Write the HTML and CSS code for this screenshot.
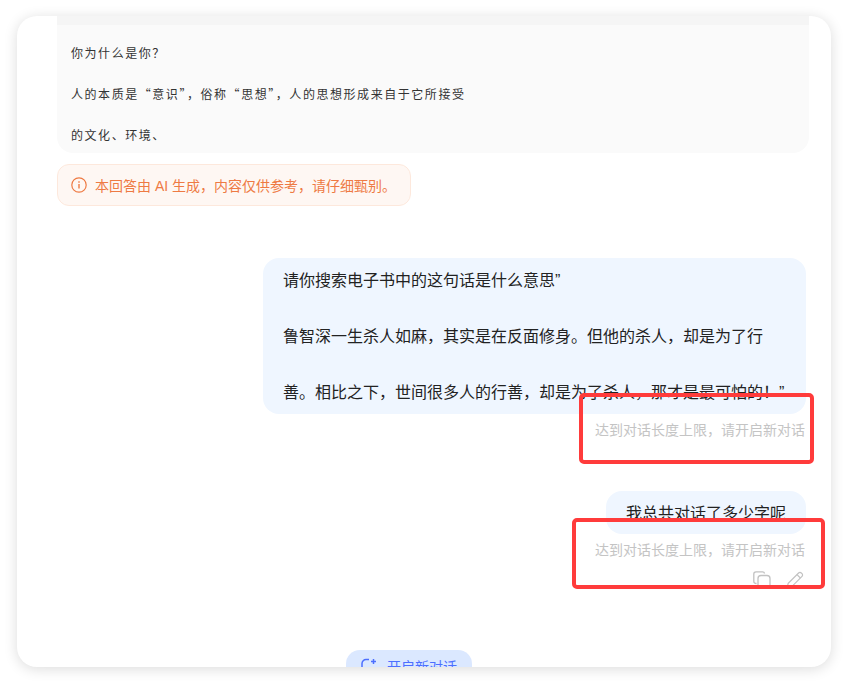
FILE: index.html
```html
<!DOCTYPE html>
<html lang="zh-CN">
<head>
    <meta charset="UTF-8">
    <meta name="viewport" content="width=device-width, initial-scale=1.0">
    <title>对话</title>
    <link rel="stylesheet" href="styles.css">
</head>
<body>
    <div class="card">
        <div class="answer">
            <div class="answer-top"></div>
            <div class="answer-body">
                <p>你为什么是你？</p>
                <p>人的本质是“意识”，俗称“思想”，人的思想形成来自于它所接受</p>
                <p>的文化、环境、</p>
            </div>
        </div>

        <div class="notice">
            <svg class="notice-icon" viewBox="0 0 16 16" fill="none" stroke="currentColor">
                <circle cx="8" cy="8" r="7.2" stroke-width="1.2"/>
                <path d="M8 7v4.6" stroke-width="1.4"/>
                <path d="M8 4.2v1.5" stroke-width="1.4"/>
            </svg>
            <span>本回答由 AI 生成，内容仅供参考，请仔细甄别。</span>
        </div>

        <div class="bubble bubble-long">
            <p>请你搜索电子书中的这句话是什么意思”</p>
            <p>鲁智深一生杀人如麻，其实是在反面修身。但他的杀人，却是为了行</p>
            <p>善。相比之下，世间很多人的行善，却是为了杀人，那才是最可怕的！”</p>
        </div>
        <div class="limit">达到对话长度上限，请开启新对话</div>

        <div class="bubble bubble-short">
            <p>我总共对话了多少字呢</p>
        </div>
        <div class="limit">达到对话长度上限，请开启新对话</div>

        <div class="actions">
            <svg class="action-icon" viewBox="0 0 18 18" fill="none" stroke="currentColor" stroke-width="1.3">
                <path d="M3.5 12.5h-.6A2.2 2.2 0 0 1 .8 10.300V3A2.200 2.200 0 0 1 3 .8h6.500a2.200 2.200 0 0 1 2.100 1.700"/>
                <rect x="5" y="4.500" width="12" height="13" rx="3"/>
            </svg>
            <svg class="action-icon" viewBox="0 0 18 18" fill="none" stroke="currentColor" stroke-width="1.200">
                <path d="M1 17l1.200-4.600L12.600 2a1.900 1.900 0 0 1 2.700 0l.7.700a1.900 1.900 0 0 1 0 2.700L5.600 15.800z"/>
                <path d="M11 3.600l3.400 3.400"/>
            </svg>
        </div>

        <div class="new-chat-row">
            <button class="new-chat">
                <svg class="new-chat-icon" viewBox="0 0 16 16" fill="none" stroke="currentColor" stroke-width="1.500">
                    <path d="M8 1.500H5A4 4 0 0 0 1 5.500v5A4 4 0 0 0 5 14.500h6a4 4 0 0 0 4-4V9"/>
                    <path d="M12.500 1v5M10 3.500h5"/>
                </svg>
                开启新对话
            </button>
        </div>

        <div class="mark mark-one"></div>
        <div class="mark mark-two"></div>
    </div>
</body>
</html>
```

FILE: styles.css
```css
html, body {
    height: 100%;
}
body {
    margin: 0;
    padding: 16px 16px 16px 17px;
    box-sizing: border-box;
    overflow: hidden;
    background-color: white;
    font-family: "Noto Sans CJK SC", "Liberation Sans", sans-serif;
}
p {
    margin: 0;
}
.card {
    position: relative;
    height: 651px;
    padding: 0 22px 0 40px;
    background: white;
    border-radius: 20px;
    box-shadow: 0 2px 14px rgba(0, 0, 0, 0.14);
    overflow: hidden;
}
.answer {
    height: 137px;
    background: #fafafa;
    border-radius: 0 0 16px 16px;
    overflow: hidden;
}
.answer-top {
    height: 9px;
    background: #f5f5f5;
}
.answer-body {
    display: flex;
    flex-direction: column;
    gap: 23px;
    padding: 19px 14px 0;
    font-size: 12px;
    line-height: 18px;
    letter-spacing: 1.55px;
    color: #333;
}
.notice {
    display: inline-flex;
    align-items: center;
    gap: 8px;
    box-sizing: border-box;
    width: 354px;
    height: 42px;
    margin-top: 11px;
    padding: 0 0 0 13px;
    background: #fef7f3;
    border: 1px solid #fde8dc;
    border-radius: 12px;
    font-family: "Liberation Sans", "Noto Sans CJK SC", sans-serif;
    font-size: 14px;
    color: #ee7a43;
    white-space: nowrap;
}
.notice-icon {
    width: 16px;
    height: 16px;
}
.bubble {
    margin-left: auto;
    margin-right: 3px;
    padding: 11px 20px 0;
    background: #eff6ff;
    border-radius: 16px;
    box-sizing: border-box;
    font-family: "Liberation Sans", "Noto Sans CJK SC", sans-serif;
    font-size: 16px;
    line-height: 24px;
    color: #222;
    white-space: nowrap;
}
.bubble-long {
    display: flex;
    flex-direction: column;
    gap: 32px;
    width: 543px;
    height: 156px;
    margin-top: 52px;
}
.bubble-short {
    width: 200px;
    height: 43px;
    margin-top: 52px;
}
.limit {
    margin-top: 5px;
    margin-right: 4px;
    text-align: right;
    font-size: 14px;
    line-height: 20px;
    color: #c4c4c4;
}
.actions {
    display: flex;
    justify-content: flex-end;
    gap: 15px;
    margin-top: 12px;
    margin-right: 5px;
    color: #c2c2c2;
}
.action-icon {
    width: 18px;
    height: 18px;
}
.new-chat-row {
    margin-top: 61px;
    padding-left: 289px;
}
.new-chat {
    display: flex;
    align-items: center;
    gap: 10px;
    width: 126px;
    height: 32px;
    padding: 0 15px;
    background: #dbe8ff;
    border: none;
    border-radius: 14px;
    font-family: inherit;
    font-size: 14px;
    color: #4d6fff;
    white-space: nowrap;
}
.new-chat-icon {
    width: 16px;
    height: 16px;
    flex: none;
}
/* red review marks drawn over the screenshot */
.mark {
    position: absolute;
    box-sizing: border-box;
    height: 71px;
    border: 4px solid #ff3b3b;
    border-radius: 5px;
}
.mark-one {
    top: 377px;
    left: 562px;
    width: 235px;
}
.mark-two {
    top: 502px;
    left: 555px;
    width: 253px;
}
```
